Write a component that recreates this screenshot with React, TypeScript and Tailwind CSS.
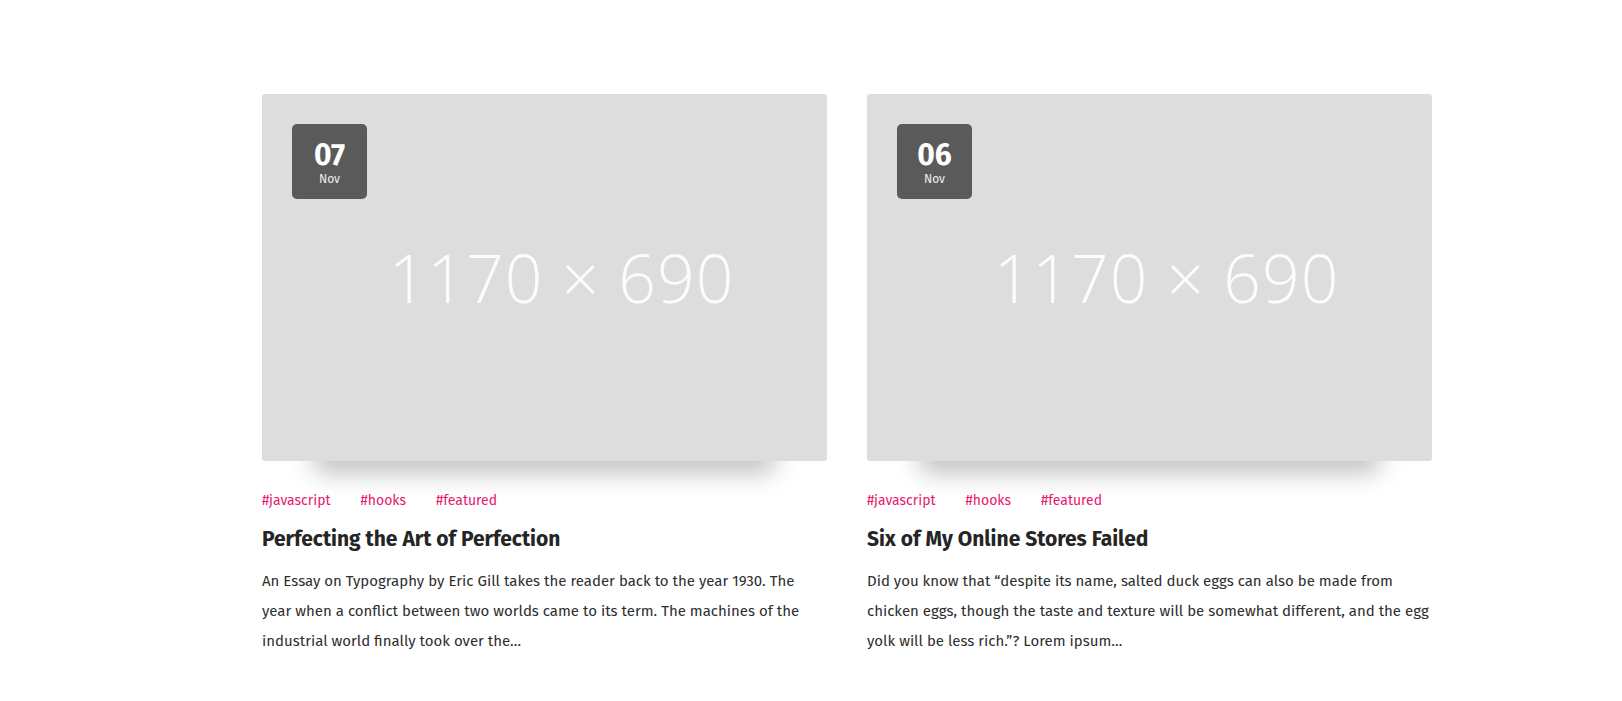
import React from "react";

const posts = [
	{
		day: "07",
		month: "Nov",
		title: "Perfecting the Art of Perfection",
		excerpt:
			"An Essay on Typography by Eric Gill takes the reader back to the year 1930. The year when a conflict between two worlds came to its term. The machines of the industrial world finally took over the…",
	},
	{
		day: "06",
		month: "Nov",
		title: "Six of My Online Stores Failed",
		excerpt:
			"Did you know that “despite its name, salted duck eggs can also be made from chicken eggs, though the taste and texture will be somewhat different, and the egg yolk will be less rich.”? Lorem ipsum…",
	},
];

const tags = ["#javascript", "#hooks", "#featured"];

export default function App() {
	return (
		<div className="min-h-screen bg-white font-['Fira_Sans',Lato,'Noto_Sans',sans-serif]">
			<div className="flex gap-[40px] pl-[262px] pt-[94px]">
				{posts.map((post) => (
					<PostCard key={post.title} {...post} />
				))}
			</div>
		</div>
	);
}

function PostCard({
	day,
	month,
	title,
	excerpt,
}: { day: string; month: string; title: string; excerpt: string }) {
	return (
		<article className="w-[565px]">
			<div className="relative">
				{/* soft shadow under the picture */}
				<div className="absolute left-[50px] right-[50px] bottom-[6px] h-[30px] rounded-full shadow-[0_18px_24px_rgba(0,0,0,0.25)]" />
				<div className="relative h-[367px] rounded-[3px] bg-[#dddddd] overflow-hidden flex items-center justify-center">
					<span className="pl-[34px] text-[66px] font-light text-white/90 tracking-[1px] font-['Open_Sans',sans-serif]">
						1170 × 690
					</span>
					<div className="absolute left-[30px] top-[30px] w-[75px] h-[75px] rounded-[5px] bg-[#5a5a5a] flex flex-col items-center justify-center pt-[3px] text-white">
						<span className="text-[30px] font-bold leading-[30px]">{day}</span>
						<span className="text-[12px] leading-[14px] mt-[2px] text-white/90">{month}</span>
					</div>
				</div>
			</div>
			<div className="mt-[30px] flex gap-[30px] text-[14px] leading-[20px] text-[#e9176f]">
				{tags.map((t) => (
					<a key={t} href="#">
						{t}
					</a>
				))}
			</div>
			<h2 className="mt-[14px] text-[21px] leading-[28px] font-bold text-[#252525]">{title}</h2>
			<p className="mt-[13px] text-[15px] leading-[30px] text-[#2e2e2e]">{excerpt}</p>
		</article>
	);
}
